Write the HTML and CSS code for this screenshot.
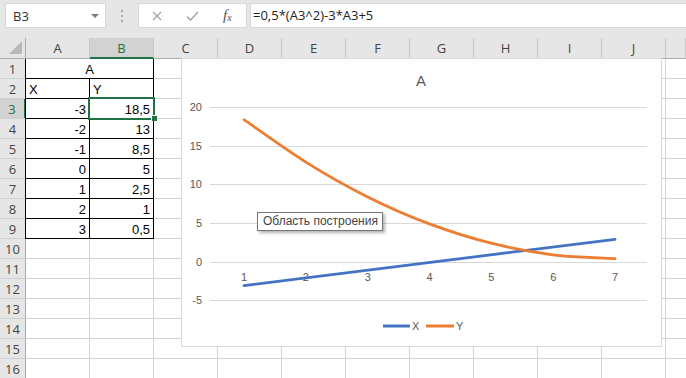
FILE: index.html
```html
<!DOCTYPE html>
<html lang="ru">
<head>
<meta charset="utf-8">
<title>Книга1 - Excel</title>
<link rel="stylesheet" href="styles.css">
</head>
<body>
<div class="formula-bar">
  <div class="namebox"><span>B3</span><span class="drop-arrow"></span></div>
  <div class="grip"><i></i><i></i><i></i></div>
  <div class="fbuttons">
    <svg width="10" height="10" viewBox="0 0 10 10"><path d="M1 1L9 9M9 1L1 9" stroke="#a3a3a3" stroke-width="1.3" fill="none"/></svg>
    <svg width="13" height="10" viewBox="0 0 13 10"><path d="M1 5.5L4.5 9L12 1" stroke="#a3a3a3" stroke-width="1.4" fill="none"/></svg>
    <span class="fx"><i>f</i><sub>x</sub></span>
  </div>
  <div class="formula">=0,5*(A3^2)-3*A3+5</div>
</div>

<div class="sheet">
  <div class="corner"><span class="tri"></span></div>
  <div class="colhead">A</div>
  <div class="colhead active">B</div>
  <div class="colhead">C</div>
  <div class="colhead">D</div>
  <div class="colhead">E</div>
  <div class="colhead">F</div>
  <div class="colhead">G</div>
  <div class="colhead">H</div>
  <div class="colhead">I</div>
  <div class="colhead">J</div>
  <div class="colhead"></div>

  <div class="rowhead">1</div>
  <div class="rowhead">2</div>
  <div class="rowhead active">3</div>
  <div class="rowhead">4</div>
  <div class="rowhead">5</div>
  <div class="rowhead">6</div>
  <div class="rowhead">7</div>
  <div class="rowhead">8</div>
  <div class="rowhead">9</div>
  <div class="rowhead">10</div>
  <div class="rowhead">11</div>
  <div class="rowhead">12</div>
  <div class="rowhead">13</div>
  <div class="rowhead">14</div>
  <div class="rowhead">15</div>
  <div class="rowhead">16</div>

  <div class="cells"></div>

  <div class="data">
    <div class="merged">A</div>
    <div class="txt">X</div><div class="txt">Y</div>
    <div>-3</div><div class="sel">18,5</div>
    <div>-2</div><div>13</div>
    <div>-1</div><div>8,5</div>
    <div>0</div><div>5</div>
    <div>1</div><div>2,5</div>
    <div>2</div><div>1</div>
    <div>3</div><div>0,5</div>
  </div>

  <div class="chart">
    <svg width="481" height="289" viewBox="0 0 481 289">
      <rect x="0.5" y="0.5" width="480" height="288" fill="#fff" stroke="#d9d9d9"/>
      <text class="title" x="240" y="28" text-anchor="middle">A</text>

      <g stroke="#d9d9d9" stroke-width="1">
        <line x1="29" y1="49.5" x2="466" y2="49.5"/>
        <line x1="29" y1="88.5" x2="466" y2="88.5"/>
        <line x1="29" y1="126.5" x2="466" y2="126.5"/>
        <line x1="29" y1="165.5" x2="466" y2="165.5"/>
        <line x1="29" y1="204.5" x2="466" y2="204.5"/>
        <line x1="29" y1="242.5" x2="466" y2="242.5"/>
      </g>

      <g class="axis" text-anchor="end">
        <text x="21" y="53">20</text>
        <text x="21" y="92">15</text>
        <text x="21" y="130">10</text>
        <text x="21" y="169">5</text>
        <text x="21" y="208">0</text>
        <text x="21" y="246">-5</text>
      </g>
      <g class="axis" text-anchor="middle">
        <text x="63" y="223">1</text>
        <text x="124.8" y="223">2</text>
        <text x="186.7" y="223">3</text>
        <text x="248.5" y="223">4</text>
        <text x="310.3" y="223">5</text>
        <text x="372.2" y="223">6</text>
        <text x="434" y="223">7</text>
      </g>

      <!-- X -->
      <path d="M63 227.7L434 181.3" stroke="#4472c4" stroke-width="2.8" stroke-linecap="round" fill="none"/>
      <!-- Y, smoothed -->
      <path d="M63 61.7C73.3 68.8 104.2 91.2 124.8 104.1C145.4 117 166.1 128.6 186.7 138.9C207.3 149.2 227.9 158.2 248.5 165.9C269.1 173.6 289.7 180.1 310.3 185.2C330.9 190.4 351.6 194.2 372.2 196.8C392.8 199.4 423.7 200 434 200.6" stroke="#ed7d31" stroke-width="2.8" stroke-linecap="round" fill="none"/>

      <line x1="202" y1="268" x2="229" y2="268" stroke="#4472c4" stroke-width="3"/>
      <text class="axis" x="231" y="272">X</text>
      <line x1="245" y1="268" x2="273" y2="268" stroke="#ed7d31" stroke-width="3"/>
      <text class="axis" x="275" y="272">Y</text>
    </svg>
    <div class="tip">Область построения</div>
  </div>
</div>
</body>
</html>
```

FILE: styles.css
```css
html, body { margin: 0; padding: 0; }
body { width: 686px; height: 378px; overflow: hidden; background: #fff; font-family: "Open Sans", "Liberation Sans", sans-serif; color: #333; }

/* formula bar */
.formula-bar { display: flex; align-items: flex-start; height: 38px; box-sizing: border-box; padding: 3px 0 0 5px; background: #e6e6e6; }
.namebox { display: flex; align-items: center; justify-content: space-between; width: 101px; height: 25px; box-sizing: border-box; padding: 0 6px 0 7px; background: #fff; border: 1px solid #d8d8d8; font-size: 13px; color: #333; }
.drop-arrow { width: 0; height: 0; border-left: 4px solid transparent; border-right: 4px solid transparent; border-top: 4px solid #7a7a7a; }
.grip { display: flex; flex-direction: column; align-items: center; justify-content: center; gap: 3px; width: 32px; height: 25px; }
.grip i { display: block; width: 2px; height: 2px; background: #a8a8a8; }
.fbuttons { display: flex; align-items: center; gap: 24px; width: 109px; height: 25px; box-sizing: border-box; padding-left: 13px; background: #fff; border: 1px solid #d8d8d8; }
.fx { font-family: "Liberation Serif", serif; font-size: 15px; color: #555; font-style: italic; line-height: 1; }
.fx sub { font-size: 10px; vertical-align: -1px; }
.formula { flex: 1; height: 25px; box-sizing: border-box; margin-left: 3px; padding-left: 2px; line-height: 23px; background: #fff; border: 1px solid #d8d8d8; border-right: 0; font-size: 13px; color: #222; }

/* sheet grid */
.sheet { position: relative; display: grid; grid-template-columns: 26px repeat(10, 64px) 1fr; grid-template-rows: 21px repeat(16, 20px); font-size: 13px; }
.corner { display: flex; align-items: flex-end; justify-content: flex-end; padding: 0 3px 4px 0; background: #e6e6e6; border-right: 1px solid #ababab; border-bottom: 1px solid #ababab; box-sizing: border-box; }
.tri { width: 0; height: 0; border-left: 13px solid transparent; border-bottom: 13px solid #b9b9b9; }
.colhead { background: #e6e6e6; border-right: 1px solid #c8c8c8; border-bottom: 1px solid #ababab; box-sizing: border-box; text-align: center; line-height: 20px; color: #444; }
.colhead.active { background: #d2d2d2; color: #217346; border-bottom: 2px solid #217346; }
.rowhead { grid-column: 1; background: #e6e6e6; border-right: 1px solid #ababab; border-bottom: 1px solid #cfcfcf; box-sizing: border-box; text-align: center; line-height: 20px; color: #444; }
.rowhead.active { background: #d2d2d2; color: #217346; border-right: 2px solid #217346; }

.cells { grid-column: 2 / -1; grid-row: 2 / -1; background-image: linear-gradient(to left, #d4d4d4 1px, transparent 1px), linear-gradient(to top, #d4d4d4 1px, transparent 1px); background-size: 64px 20px; }

.data { grid-column: 2 / 4; grid-row: 2 / 11; margin-left: -1px; border-left: 1px solid #000; display: grid; grid-template-columns: 64px 64px; grid-template-rows: repeat(9, 20px); background: #fff; font-family: "Liberation Sans", sans-serif; font-size: 13px; color: #000; }
.data > div { box-sizing: border-box; border-right: 1px solid #000; border-bottom: 1px solid #000; padding: 1px 3px 0; line-height: 19px; text-align: right; }
.data > .merged { grid-column: span 2; text-align: center; }
.data > .txt { text-align: left; }
.data > .sel { position: relative; }
.sel::after { content: ""; position: absolute; inset: -2px; border: 2px solid #217346; }
.sel::before { content: ""; position: absolute; right: -4px; bottom: -3px; width: 6px; height: 6px; box-sizing: border-box; background: #217346; border-left: 1px solid #fff; border-top: 1px solid #fff; z-index: 1; }

/* chart */
.chart { position: absolute; left: 181px; top: 20px; width: 481px; height: 289px; }
.chart svg { display: block; font-family: "Liberation Sans", sans-serif; }
.chart .title { font-size: 15px; fill: #595959; }
.chart .axis { font-size: 11px; fill: #595959; }
.tip { position: absolute; left: 76px; top: 154px; width: 126px; height: 19px; box-sizing: border-box; padding-left: 5px; background: #fff; border: 1px solid #767676; box-shadow: 2px 2px 3px rgba(0, 0, 0, 0.3); font-family: "Liberation Sans", sans-serif; font-size: 12px; line-height: 17px; color: #444; }
```
